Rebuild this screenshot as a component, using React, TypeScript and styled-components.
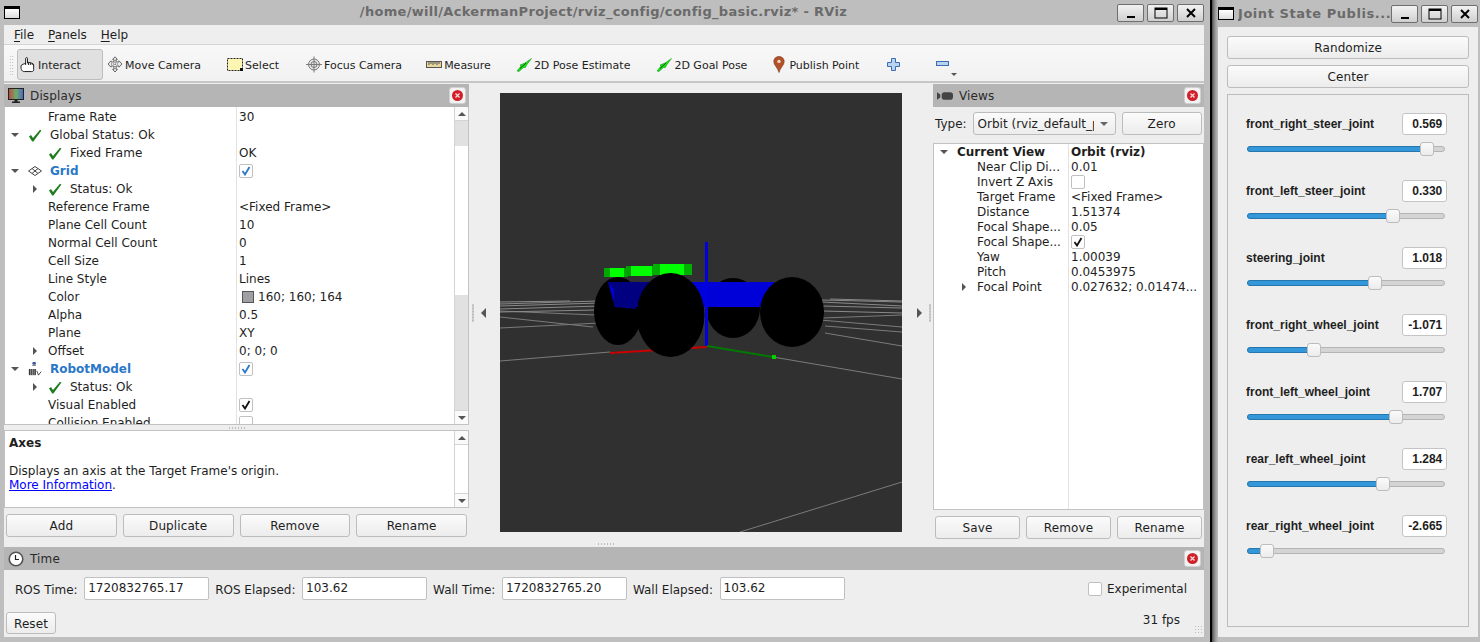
import React from "react";
import styled, { createGlobalStyle } from "styled-components";

const GlobalStyle = createGlobalStyle`
  html, body {
    margin: 0;
    padding: 0;
    height: 100%;
    overflow: hidden;
    background: #bebebe;
  }
  * { box-sizing: border-box; }
`;

const Desktop = styled.div`
  display: flex;
  width: 1480px;
  height: 642px;
  font-family: "DejaVu Sans", sans-serif;
  font-size: 12px;
  color: #1e1e1e;
  overflow: hidden;
`;

/* window frames */
const RvizWindow = styled.div`
  width: 1210px;
  height: 642px;
  flex: none;
  display: flex;
  flex-direction: column;
  background: #bebebe;
  padding: 0 6px 5px 4px;
`;

const WindowEdge = styled.div`
  width: 8px;
  flex: none;
  border-left: 2px solid #000;
  background: linear-gradient(90deg, #4a4a4a, #8f8f8f 45%, #bdbdbd);
`;

const JointWindow = styled.div`
  flex: 1;
  height: 642px;
  display: flex;
  flex-direction: column;
  background: #bebebe;
  padding: 0 4px 5px 0;
`;

const TitleBar = styled.div<{ $h: number }>`
  height: ${(p) => p.$h}px;
  flex: none;
  display: flex;
  align-items: center;
  font-weight: 700;
  font-size: 13px;
  color: #6a6a6a;
`;

const WindowGlyph = styled.div`
  width: 16px;
  height: 13px;
  flex: none;
  background: linear-gradient(#fff, #ddd);
  border: 1px solid #000;
  border-top-width: 3px;
`;

const TitleText = styled.div`
  flex: 1;
  text-align: center;
  white-space: nowrap;
  overflow: hidden;
  letter-spacing: 0.3px;
  padding: 0 0 2px 70px;
`;

const JointTitle = styled(TitleText)`
  text-align: left;
  padding: 0;
  margin-left: 4px;
  letter-spacing: 0.55px;
`;

const WinButtons = styled.div`
  display: flex;
  gap: 3px;
  flex: none;
`;

const WinButton = styled.div`
  width: 27px;
  height: 18px;
  background: linear-gradient(#f2f2f2, #cfcfcf);
  border: 1px solid #6e6e6e;
  border-radius: 2px;
  display: flex;
  align-items: center;
  justify-content: center;
`;

/* menu and toolbar */
const MenuBar = styled.div`
  height: 20px;
  flex: none;
  display: flex;
  align-items: center;
  gap: 14px;
  padding-left: 10px;
  background: #eeeeee;
  border-bottom: 1px solid #d4d4d4;
`;

const MenuItem = styled.span`
  u { text-decoration-thickness: 1px; text-underline-offset: 2px; }
`;

const Toolbar = styled.div`
  height: 38px;
  flex: none;
  display: flex;
  align-items: center;
  padding: 3px 0 0 5px;
  font-size: 11px;
  background: linear-gradient(#f8f8f8, #f1f1f1);
  border-bottom: 2px solid #c6c6c6;
`;

const GripDots = styled.div`
  width: 5px;
  height: 20px;
  margin-right: 3px;
  flex: none;
  background-image: radial-gradient(#b4b4b4 0.7px, transparent 0.8px);
  background-size: 2.5px 3px;
`;

const ToolButton = styled.div<{ $active?: boolean; $end: number }>`
  height: 31px;
  display: flex;
  align-items: center;
  gap: 2px;
  padding: 0 ${(p) => p.$end}px 0 ${(p) => (p.$active ? 2 : 4)}px;
  white-space: nowrap;
  border-radius: 3px;
  border: 1px solid ${(p) => (p.$active ? "#bcbcbc" : "transparent")};
  background: ${(p) => (p.$active ? "#e0e0e0" : "transparent")};
  margin-left: ${(p) => (p.$active ? 0 : -1)}px;
  position: relative;
`;

const ToolIcon = styled.div`
  width: 16px;
  flex: none;
  display: flex;
  align-items: center;
  justify-content: center;
`;

const ToolLabel = styled.span`
  padding-top: 2px;
`;

const ToolChevron = styled.div`
  position: absolute;
  right: -4px;
  bottom: 3px;
  width: 0;
  height: 0;
  border: 3px solid transparent;
  border-top: 3px solid #555;
  border-bottom: 0;
`;

/* main area */
const MainArea = styled.div`
  flex: 1;
  min-height: 0;
  display: flex;
  background: #eeeeee;
`;

const DisplaysColumn = styled.div`
  width: 465px;
  flex: none;
  display: flex;
  flex-direction: column;
  padding-top: 1px;
`;

const ViewsColumn = styled.div`
  width: 271px;
  flex: none;
  display: flex;
  flex-direction: column;
  padding-top: 1px;
`;

const CenterColumn = styled.div`
  flex: 1;
  display: flex;
  position: relative;
  padding: 10px 0 15px;
`;

const SideRail = styled.div<{ $inset: number }>`
  flex: 0 0 31px;
  display: flex;
  align-items: center;
  gap: 7px;
  padding-left: ${(p) => p.$inset}px;
`;

const DotsV = styled.div`
  width: 2px;
  height: 18px;
  flex: none;
  background-image: radial-gradient(#bdbdbd 0.8px, transparent 0.9px);
  background-size: 2px 3px;
`;

const DotsH = styled.div`
  position: absolute;
  bottom: 2px;
  left: 128px;
  width: 17px;
  height: 2px;
  background-image: radial-gradient(#bdbdbd 0.8px, transparent 0.9px);
  background-size: 3px 2px;
`;

const RailArrow = styled.div<{ $dir: "left" | "right" }>`
  width: 0;
  height: 0;
  flex: none;
  border-top: 5px solid transparent;
  border-bottom: 5px solid transparent;
  ${(p) => (p.$dir === "left" ? "border-right: 5px solid #555;" : "border-left: 5px solid #555;")}
`;

const Viewport = styled.div`
  width: 402px;
  height: 439px;
  flex: none;
  background: #303030;
  svg { display: block; }
`;

const DockTitle = styled.div`
  height: 23px;
  flex: none;
  display: flex;
  align-items: center;
  gap: 6px;
  padding: 0 3px 0 4px;
  background: #b5b5b5;
  color: #2a2a2a;
`;

const DockName = styled.div`
  flex: 1;
  letter-spacing: 0.15px;
`;

const DockClose = styled.div`
  width: 17px;
  height: 17px;
  background: #f3f3f3;
  border: 1px solid #d0d0d0;
  border-radius: 3px;
  display: flex;
  align-items: center;
  justify-content: center;
`;

/* property trees */
const TreeFrame = styled.div<{ $h: number; $top?: boolean }>`
  height: ${(p) => p.$h}px;
  flex: none;
  display: flex;
  background: #fff;
  border: 1px solid #c2c2c2;
  ${(p) => (p.$top ? "" : "border-top: 0;")}
  overflow: hidden;
`;

const TreeBody = styled.div<{ $split: number; $top: number }>`
  flex: 1;
  min-width: 0;
  overflow: hidden;
  padding-top: ${(p) => p.$top}px;
  background: linear-gradient(#e2e2e2, #e2e2e2) no-repeat ${(p) => p.$split}px 0 / 1px 100%;
`;

const TreeRow = styled.div<{ $h: number; $split: number }>`
  height: ${(p) => p.$h}px;
  display: grid;
  grid-template-columns: ${(p) => p.$split}px 1fr;
  align-items: center;
  white-space: nowrap;
`;

const NameCell = styled.div<{ $level: number }>`
  display: flex;
  align-items: center;
  padding-left: ${(p) => p.$level * 20}px;
  min-width: 0;
`;

const ArrowSlot = styled.div`
  width: 20px;
  flex: none;
  display: flex;
  justify-content: center;
`;

const RowArrow = styled.div<{ $open?: boolean }>`
  width: 0;
  height: 0;
  ${(p) =>
    p.$open
      ? "border-left: 4px solid transparent; border-right: 4px solid transparent; border-top: 4px solid #555;"
      : "border-top: 4px solid transparent; border-bottom: 4px solid transparent; border-left: 4px solid #555;"}
`;

const RowIcon = styled.div`
  width: 14px;
  height: 14px;
  flex: none;
  margin: 0 8px 0 3px;
  display: flex;
  align-items: center;
  justify-content: center;
`;

const RowName = styled.span<{ $kind?: "group" | "bold"; $afterIcon: boolean }>`
  margin-left: ${(p) => (p.$afterIcon ? 0 : 3)}px;
  font-weight: ${(p) => (p.$kind ? 700 : 400)};
  color: ${(p) => (p.$kind === "group" ? "#2b77c8" : "inherit")};
`;

const ValueCell = styled.div<{ $bold?: boolean }>`
  padding-left: 3px;
  display: flex;
  align-items: center;
  gap: 4px;
  font-weight: ${(p) => (p.$bold ? 700 : 400)};
  overflow: hidden;
  min-width: 0;
`;

const Swatch = styled.div`
  width: 12px;
  height: 12px;
  margin-left: 3px;
  background: #a0a0a4;
  border: 1px solid #555;
`;

const CheckBox = styled.div`
  width: 14px;
  height: 14px;
  flex: none;
  background: #fff;
  border: 1px solid #c0c0c0;
  border-radius: 2px;
  display: flex;
  align-items: center;
  justify-content: center;
`;

/* scrollbars */
const ScrollBar = styled.div`
  width: 14px;
  flex: none;
  display: flex;
  flex-direction: column;
  background: #fff;
  border-left: 1px solid #d4d4d4;
`;

const ScrollButton = styled.div<{ $dir: "up" | "down" }>`
  height: 14px;
  flex: none;
  display: flex;
  align-items: center;
  justify-content: center;
  background: #fafafa;
  border-${(p) => (p.$dir === "up" ? "bottom" : "top")}: 1px solid #d4d4d4;
  &::after {
    content: "";
    border-left: 4px solid transparent;
    border-right: 4px solid transparent;
    border-${(p) => (p.$dir === "up" ? "bottom" : "top")}: 4px solid #555;
  }
`;

const ScrollThumb = styled.div<{ $h: number }>`
  height: ${(p) => p.$h}px;
  flex: none;
  background: #e1e1e1;
`;

const ScrollGap = styled.div`
  flex: 1;
`;

const SplitDots = styled.div`
  height: 5px;
  flex: none;
  display: flex;
  justify-content: center;
  align-items: center;
  &::after {
    content: "";
    width: 17px;
    height: 2px;
    background-image: radial-gradient(#bdbdbd 0.8px, transparent 0.9px);
    background-size: 3px 2px;
  }
`;

const DescriptionFrame = styled.div`
  height: 78px;
  flex: none;
  display: flex;
  background: #fff;
  border: 1px solid #c2c2c2;
`;

const DescriptionText = styled.div`
  flex: 1;
  padding: 5px 4px;
  line-height: 14px;
`;

const DescTitle = styled.div`
  font-weight: 700;
  margin-bottom: 14px;
`;

const MoreLink = styled.a`
  color: #0000ff;
  text-decoration: underline;
`;

/* buttons and fields */
const ButtonRow = styled.div<{ $pad: string; $gap: number }>`
  display: flex;
  gap: ${(p) => p.$gap}px;
  padding: ${(p) => p.$pad};
`;

const PushButton = styled.div<{ $w?: number }>`
  height: 23px;
  flex: ${(p) => (p.$w ? `0 0 ${p.$w}px` : "1 1 0")};
  display: flex;
  align-items: center;
  justify-content: center;
  background: linear-gradient(#fbfbfb, #ececec);
  border: 1px solid #bcbcbc;
  border-radius: 3px;
  letter-spacing: 0.1px;
`;

const TypeRow = styled.div`
  display: flex;
  align-items: center;
  height: 23px;
  margin: 5px 2px 8px;
  gap: 6px;
`;

const Combo = styled.div`
  width: 143px;
  height: 23px;
  flex: none;
  display: flex;
  align-items: center;
  padding-left: 4px;
  background: linear-gradient(#fbfbfb, #ececec);
  border: 1px solid #bcbcbc;
  border-radius: 3px;
`;

const ComboText = styled.div`
  width: 116px;
  overflow: hidden;
  white-space: nowrap;
`;

const ComboArrow = styled.div`
  margin-left: 6px;
  border-left: 4px solid transparent;
  border-right: 4px solid transparent;
  border-top: 4px solid #666;
`;

const TimePanel = styled.div`
  height: 90px;
  flex: none;
  display: flex;
  flex-direction: column;
  background: #eeeeee;
  position: relative;
`;

const TimeRow = styled.div`
  display: flex;
  align-items: center;
  height: 23px;
  margin-top: 7px;
  padding-left: 11px;
`;

const TimeLabel = styled.span`
  margin-right: 6.5px;
  padding-top: 2px;
  white-space: nowrap;
`;

const TimeField = styled.div`
  width: 125px;
  height: 23px;
  flex: none;
  margin-right: 6px;
  padding: 0 3px 1px;
  display: flex;
  align-items: center;
  background: #fff;
  border: 1px solid #c0c0c0;
  border-radius: 2px;
`;

const Experimental = styled.div`
  margin-left: auto;
  margin-right: 17px;
  display: flex;
  align-items: center;
  gap: 5px;
`;

const TimeFooter = styled.div`
  display: flex;
  align-items: center;
  justify-content: space-between;
  margin-top: 12px;
  padding: 0 24px 0 2px;
`;

const FpsText = styled.span`
  margin-bottom: 6px;
`;

const ResetButton = styled(PushButton)`
  height: 22px;
  padding-top: 1px;
`;

const ResizeGrip = styled.div`
  position: absolute;
  right: 0;
  bottom: 2px;
  width: 10px;
  height: 10px;
  background-image: radial-gradient(#bdbdbd 0.7px, transparent 0.8px);
  background-size: 3px 3px;
`;

/* joint state publisher */
const JointBody = styled.div`
  flex: 1;
  display: flex;
  flex-direction: column;
  background: #eeeeee;
  padding: 9px 9px 10px;
`;

const JointButton = styled(PushButton)`
  flex: none;
  margin-bottom: 6px;
`;

const JointBox = styled.div`
  flex: 1;
  border: 1px solid #bcbcbc;
  padding: 18px 21px 0 18px;
`;

const JointItem = styled.div`
  height: 67px;
`;

const JointHead = styled.div`
  height: 22px;
  display: flex;
  align-items: center;
  justify-content: space-between;
  font-family: "Liberation Sans", Arial, sans-serif;
  font-weight: 700;
  font-size: 12px;
`;

const JointValue = styled.div`
  width: 45px;
  height: 22px;
  display: flex;
  align-items: center;
  justify-content: flex-end;
  padding-right: 4px;
  background: #fff;
  border: 1px solid #c4c4c4;
  border-radius: 3px;
`;

const SliderGroove = styled.div`
  position: relative;
  height: 6px;
  margin: 11px 0 0 1px;
  width: 198px;
  background: #d4d4d4;
  border: 1px solid #b4b4b4;
  border-radius: 3px;
`;

const SliderFill = styled.div<{ $pos: number }>`
  width: ${(p) => p.$pos + 4}px;
  height: 6px;
  margin: -1px 0 0 -1px;
  background: #3497da;
  border: 1px solid #2677ad;
  border-radius: 3px;
`;

const SliderHandle = styled.div<{ $pos: number }>`
  position: absolute;
  top: -5px;
  left: ${(p) => p.$pos - 1}px;
  width: 14px;
  height: 14px;
  background: linear-gradient(#fafafa, #ececec);
  border: 1px solid #bcbcbc;
  border-radius: 3px;
`;

/* icons */
const Minimize = () => (
  <svg width="14" height="12" viewBox="0 0 14 12"><rect x="3" y="9" width="8" height="2" fill="#000" /></svg>
);
const Maximize = () => (
  <svg width="14" height="12" viewBox="0 0 14 12"><rect x="1" y="1" width="12" height="10" fill="none" stroke="#000" /><rect x="1" y="1" width="12" height="2" fill="#000" /></svg>
);
const CloseX = () => (
  <svg width="12" height="12" viewBox="0 0 12 12"><path d="M2 2 10 10M10 2 2 10" stroke="#000" strokeWidth="2" /></svg>
);
const CloseDot = () => (
  <svg width="13" height="13" viewBox="0 0 13 13">
    <circle cx="6.5" cy="6.5" r="5.5" fill="#d0202a" />
    <path d="M4.5 4.5 8.5 8.5M8.5 4.5 4.5 8.5" stroke="#f6d5d5" strokeWidth="1.4" />
  </svg>
);
const HandIcon = () => (
  <svg width="16" height="17" viewBox="0 0 17 17" fill="#fff" stroke="#111" strokeWidth="1" strokeLinejoin="round">
    <path d="M6 9V2.2c0-1.4 2-1.4 2 0V7l1 -.7 1.6.2 1.2.4 1.7.6c.7.2 1 .7 1 1.4V14c0 1.3-.8 2-2 2H4.5C3 16 2 15 1.5 13.8.8 12.2 1 10.4 1.5 9.2 2.4 8.7 4 7.6 6 7.4" />
    <path d="M9 6.5V9M11 6.8V9M13 7.2V9" fill="none" />
  </svg>
);
const MoveIcon = () => (
  <svg width="16" height="17" viewBox="0 0 16 17" fill="#e8e8e8" stroke="#6a6a6a" strokeWidth="1">
    <path d="M8 .8 10.4 3.4H9.2V6H12V4.8L15 8 12 11.2V10H9.2V13.4H10.4L8 16 5.6 13.4H6.8V10H4V11.2L1 8 4 4.8V6H6.8V3.4H5.6Z" />
    <path d="M4 8H12M8 4V13" strokeDasharray="1 1" />
  </svg>
);
const SelectIcon = () => (
  <svg width="16" height="14" viewBox="0 0 16 14">
    <rect x=".5" y=".5" width="15" height="12" fill="#fdf6b2" stroke="#222" strokeDasharray="2 1" />
    <rect x="13" y="10" width="3" height="3" fill="#111" />
  </svg>
);
const FocusIcon = () => (
  <svg width="16" height="17" viewBox="0 0 16 17" fill="none" stroke="#7a7a7a">
    <path d="M8 .5V16.5M0 8.5H16" />
    <circle cx="8" cy="8.5" r="5.5" fill="#e6e6e6" />
    <circle cx="8" cy="8.5" r="3" />
    <path d="M8 3V14M2.5 8.5H13.5" />
  </svg>
);
const RulerIcon = () => (
  <svg width="16" height="8" viewBox="0 0 16 8">
    <rect x=".5" y=".5" width="15" height="6" fill="#e6d89a" stroke="#555" />
    <path d="M3 1V4M5 1V3M7 1V4M9 1V3M11 1V4M13 1V3" stroke="#555" />
  </svg>
);
const PoseIcon = () => (
  <svg width="16" height="14" viewBox="0 0 16 14">
    <path d="M1 13 5 8 4 7 9 5 15.5 .5 11 6.5 9 10 8 9 3 13.5Z" fill="#14e614" stroke="#0b8a0b" strokeWidth=".5" />
    <path d="M4 10.5 10 5" stroke="#055a05" strokeWidth="1" />
  </svg>
);
const PinIcon = () => (
  <svg width="12" height="17" viewBox="0 0 12 17">
    <path d="M6 .5C2.8.5.8 2.8.8 5.6.8 9 4.6 11.6 6 16.5 7.4 11.6 11.2 9 11.2 5.6 11.2 2.8 9.2.5 6 .5Z" fill="#b3522a" stroke="#7a3518" strokeWidth=".6" />
    <circle cx="6" cy="5.4" r="1.7" fill="#f4d8c4" />
  </svg>
);
const PlusIcon = () => (
  <svg width="13" height="13" viewBox="0 0 13 13">
    <path d="M4.5.5H8.5V4.5H12.5V8.5H8.5V12.5H4.5V8.5H.5V4.5H4.5Z" fill="#b9d2ee" stroke="#3a6fb5" />
  </svg>
);
const MinusIcon = () => (
  <svg width="13" height="13" viewBox="0 0 13 13">
    <rect x=".5" y="3.5" width="12" height="4" fill="#b9d2ee" stroke="#3a6fb5" />
  </svg>
);
const MonitorIcon = () => (
  <svg width="16" height="16" viewBox="0 0 16 16">
    <defs>
      <linearGradient id="screenGrad" x1="0" x2="1" y1="0" y2="0">
        <stop offset="0" stopColor="#c2433f" />
        <stop offset=".5" stopColor="#6fae6a" />
        <stop offset="1" stopColor="#4f63c4" />
      </linearGradient>
    </defs>
    <rect x=".5" y=".5" width="15" height="11" fill="url(#screenGrad)" stroke="#222" />
    <path d="M6.5 12H9.5V13.5H12V15H4V13.5H6.5Z" fill="#222" />
  </svg>
);
const CameraIcon = () => (
  <svg width="16" height="12" viewBox="0 0 17 12">
    <path d="M0 2 3.5 4.5V7.5L0 10Z" fill="#444" />
    <rect x="5" y="2" width="12" height="8" rx="3" fill="#444" />
  </svg>
);
const ClockIcon = () => (
  <svg width="16" height="16" viewBox="0 0 16 16">
    <circle cx="8" cy="8" r="6.8" fill="#fff" stroke="#555" strokeWidth="1.6" />
    <path d="M7.5 4V8.5H11" fill="none" stroke="#222" strokeWidth="1.2" />
  </svg>
);
const GreenCheck = () => (
  <svg width="14" height="13" viewBox="0 0 14 13">
    <path d="M1 7.5 3 6 5 9 12 .8 13.4 1.6 5.4 12.6H4.2Z" fill="#1d7d1d" />
  </svg>
);
const TickMark = ({ color }: { color: string }) => (
  <svg width="10" height="10" viewBox="0 0 10 10">
    <path d="M1.5 5 4 8.5 8.5 1" fill="none" stroke={color} strokeWidth="1.8" />
  </svg>
);
const GridIcon = () => (
  <svg width="14" height="10" viewBox="0 0 14 10" fill="none" stroke="#444">
    <path d="M7 .5 13.5 5 7 9.5 .5 5Z" />
    <path d="M4 2.5 10 7.5M10 2.5 4 7.5" />
  </svg>
);
const RobotIcon = () => (
  <svg width="16" height="16" viewBox="0 0 16 16">
    <rect x="5" y="0" width="4" height="3" rx="1" fill="#3a5a9a" />
    <rect x="5" y="3.5" width="4" height="1" fill="#777" />
    <path d="M1 8H9V15H1Z" fill="#333" />
    <path d="M3 8V15M5 8V15M7 8V15" stroke="#ddd" strokeWidth=".7" />
    <path d="M10 10 12 15 15 11" fill="none" stroke="#333" strokeWidth="1" />
  </svg>
);

const Scene = () => (
  <svg width="402" height="439" viewBox="500 93 402 439">
    <g stroke="#7b7b7b" strokeWidth="1" fill="none">
      <path d="M500 361 610 352M773 357 902 379M902 482 740 532" />
      <path d="M500 317 593 327M500 328 600 323M825 326 902 332M825 333 902 346" />
      <path d="M820 320 902 327M500 311 596 315M823 318 902 315" />
    </g>
    <g stroke="#8a8a8a" strokeWidth="1" fill="none">
      <path d="M500 304 598 301M500 306 600 303M500 309 600 306M500 312 596 310" />
      <path d="M822 300 902 302M822 302 902 306M822 306 902 308M822 311 902 313" />
      <path d="M500 302 570 301M830 299 902 301" />
    </g>
    <g shapeRendering="crispEdges">
      <rect x="604" y="268" width="24" height="9" fill="#00a800" />
      <rect x="610" y="268" width="14" height="9" fill="#00ff00" />
      <rect x="626" y="266" width="27" height="10" fill="#00a000" />
      <rect x="631" y="266" width="21" height="10" fill="#00ff00" />
      <rect x="653" y="264" width="39" height="11" fill="#00b000" />
      <rect x="660" y="264" width="24" height="11" fill="#00ff00" />
    </g>
    <ellipse cx="618" cy="311" rx="24" ry="34" fill="#000" />
    <ellipse cx="733" cy="308" rx="27" ry="30" fill="#000" />
    <path d="M608 282 775 282 760 307 615 307Z" fill="#0000d8" />
    <path d="M608 282 650 282 635 309 614 307 614 290Z" fill="#000080" />
    <rect x="705" y="242" width="3" height="104" fill="#0000e0" />
    <path d="M610 352 707 346 707 348 610 354Z" fill="#c80000" />
    <path d="M707 345 773 356 773 358 707 347Z" fill="#007a00" />
    <rect x="772" y="355" width="4" height="4" fill="#00d000" />
    <ellipse cx="670.5" cy="315" rx="34" ry="42" fill="#000" />
    <ellipse cx="792" cy="312" rx="32" ry="35" fill="#000" />
  </svg>
);

type DisplayRow = {
  name: string;
  level?: number;
  arrow?: "open" | "closed";
  icon?: React.ReactNode;
  kind?: "group" | "bold";
  value?: React.ReactNode;
  bold?: boolean;
};

const tick = (c: string) => (
  <CheckBox>
    <TickMark color={c} />
  </CheckBox>
);

const DISPLAY_ROWS: DisplayRow[] = [
  { name: "Frame Rate", level: 1, value: "30" },
  { name: "Global Status: Ok", arrow: "open", icon: <GreenCheck /> },
  { name: "Fixed Frame", level: 1, icon: <GreenCheck />, value: "OK" },
  { name: "Grid", arrow: "open", icon: <GridIcon />, kind: "group", value: tick("#2b77c8") },
  { name: "Status: Ok", level: 1, arrow: "closed", icon: <GreenCheck /> },
  { name: "Reference Frame", level: 1, value: "<Fixed Frame>" },
  { name: "Plane Cell Count", level: 1, value: "10" },
  { name: "Normal Cell Count", level: 1, value: "0" },
  { name: "Cell Size", level: 1, value: "1" },
  { name: "Line Style", level: 1, value: "Lines" },
  { name: "Color", level: 1, value: <><Swatch />160; 160; 164</> },
  { name: "Alpha", level: 1, value: "0.5" },
  { name: "Plane", level: 1, value: "XY" },
  { name: "Offset", level: 1, arrow: "closed", value: "0; 0; 0" },
  { name: "RobotModel", arrow: "open", icon: <RobotIcon />, kind: "group", value: tick("#2b77c8") },
  { name: "Status: Ok", level: 1, arrow: "closed", icon: <GreenCheck /> },
  { name: "Visual Enabled", level: 1, value: tick("#111") },
  { name: "Collision Enabled", level: 1, value: <CheckBox /> },
];

const VIEW_ROWS: DisplayRow[] = [
  { name: "Current View", arrow: "open", kind: "bold", value: "Orbit (rviz)", bold: true },
  { name: "Near Clip Di...", level: 1, value: "0.01" },
  { name: "Invert Z Axis", level: 1, value: <CheckBox /> },
  { name: "Target Frame", level: 1, value: "<Fixed Frame>" },
  { name: "Distance", level: 1, value: "1.51374" },
  { name: "Focal Shape...", level: 1, value: "0.05" },
  { name: "Focal Shape...", level: 1, value: tick("#111") },
  { name: "Yaw", level: 1, value: "1.00039" },
  { name: "Pitch", level: 1, value: "0.0453975" },
  { name: "Focal Point", level: 1, arrow: "closed", value: "0.027632; 0.01474..." },
];

const TOOLS: { label: string; icon: React.ReactNode; active?: boolean; end: number }[] = [
  { label: "Interact", icon: <HandIcon />, active: true, end: 21 },
  { label: "Move Camera", icon: <MoveIcon />, end: 21 },
  { label: "Select", icon: <SelectIcon />, end: 22 },
  { label: "Focus Camera", icon: <FocusIcon />, end: 19 },
  { label: "Measure", icon: <RulerIcon />, end: 20 },
  { label: "2D Pose Estimate", icon: <PoseIcon />, end: 21 },
  { label: "2D Goal Pose", icon: <PoseIcon />, end: 19 },
  { label: "Publish Point", icon: <PinIcon />, end: 23 },
];

const JOINTS = [
  { name: "front_right_steer_joint", value: "0.569", pos: 173 },
  { name: "front_left_steer_joint", value: "0.330", pos: 139 },
  { name: "steering_joint", value: "1.018", pos: 121 },
  { name: "front_right_wheel_joint", value: "-1.071", pos: 60 },
  { name: "front_left_wheel_joint", value: "1.707", pos: 142 },
  { name: "rear_left_wheel_joint", value: "1.284", pos: 129 },
  { name: "rear_right_wheel_joint", value: "-2.665", pos: 13 },
];

const Tree = ({ rows, rowH, split, top }: { rows: DisplayRow[]; rowH: number; split: number; top: number }) => (
  <TreeBody $split={split} $top={top}>
    {rows.map((r, i) => (
      <TreeRow key={i} $h={rowH} $split={split}>
        <NameCell $level={r.level ?? 0}>
          <ArrowSlot>{r.arrow && <RowArrow $open={r.arrow === "open"} />}</ArrowSlot>
          {r.icon && <RowIcon>{r.icon}</RowIcon>}
          <RowName $kind={r.kind} $afterIcon={!!r.icon}>{r.name}</RowName>
        </NameCell>
        <ValueCell $bold={r.bold}>{r.value}</ValueCell>
      </TreeRow>
    ))}
  </TreeBody>
);

export default function App() {
  return (
    <>
      <GlobalStyle />
      <Desktop>
        <RvizWindow>
          <TitleBar $h={25}>
            <WindowGlyph />
            <TitleText>/home/will/AckermanProject/rviz_config/config_basic.rviz* - RViz</TitleText>
            <WinButtons>
              <WinButton><Minimize /></WinButton>
              <WinButton><Maximize /></WinButton>
              <WinButton><CloseX /></WinButton>
            </WinButtons>
          </TitleBar>
          <MenuBar>
            <MenuItem><u>F</u>ile</MenuItem>
            <MenuItem><u>P</u>anels</MenuItem>
            <MenuItem><u>H</u>elp</MenuItem>
          </MenuBar>
          <Toolbar>
            <GripDots />
            {TOOLS.map((t) => (
              <ToolButton key={t.label} $active={t.active} $end={t.end}>
                <ToolIcon>{t.icon}</ToolIcon>
                <ToolLabel>{t.label}</ToolLabel>
              </ToolButton>
            ))}
            <ToolButton $end={31}><PlusIcon /></ToolButton>
            <ToolButton $end={4}>
              <MinusIcon />
              <ToolChevron />
            </ToolButton>
          </Toolbar>
          <MainArea>
            <DisplaysColumn>
              <DockTitle>
                <MonitorIcon />
                <DockName>Displays</DockName>
                <DockClose><CloseDot /></DockClose>
              </DockTitle>
              <TreeFrame $h={318}>
                <Tree rows={DISPLAY_ROWS} rowH={18} split={231} top={1} />
                <ScrollBar>
                  <ScrollButton $dir="up" />
                  <ScrollThumb $h={25} />
                  <ScrollGap />
                  <ScrollThumb $h={115} />
                  <ScrollButton $dir="down" />
                </ScrollBar>
              </TreeFrame>
              <SplitDots />
              <DescriptionFrame>
                <DescriptionText>
                  <DescTitle>Axes</DescTitle>
                  Displays an axis at the Target Frame's origin.
                  <br />
                  <MoreLink>More Information</MoreLink>.
                </DescriptionText>
                <ScrollBar>
                  <ScrollButton $dir="up" />
                  <ScrollGap />
                  <ScrollButton $dir="down" />
                </ScrollBar>
              </DescriptionFrame>
              <ButtonRow $pad="6px 2px 0" $gap={6}>
                <PushButton>Add</PushButton>
                <PushButton>Duplicate</PushButton>
                <PushButton>Remove</PushButton>
                <PushButton>Rename</PushButton>
              </ButtonRow>
            </DisplaysColumn>
            <CenterColumn>
              <SideRail $inset={3}>
                <DotsV />
                <RailArrow $dir="left" />
              </SideRail>
              <Viewport><Scene /></Viewport>
              <SideRail $inset={15}>
                <RailArrow $dir="right" />
                <DotsV />
              </SideRail>
              <DotsH />
            </CenterColumn>
            <ViewsColumn>
              <DockTitle>
                <CameraIcon />
                <DockName>Views</DockName>
                <DockClose><CloseDot /></DockClose>
              </DockTitle>
              <TypeRow>
                Type:
                <Combo>
                  <ComboText>Orbit (rviz_default_plugins)</ComboText>
                  <ComboArrow />
                </Combo>
                <PushButton $w={80}>Zero</PushButton>
              </TypeRow>
              <TreeFrame $h={367} $top>
                <Tree rows={VIEW_ROWS} rowH={15} split={134} top={0} />
              </TreeFrame>
              <ButtonRow $pad="6px 2px 0" $gap={6}>
                <PushButton>Save</PushButton>
                <PushButton>Remove</PushButton>
                <PushButton>Rename</PushButton>
              </ButtonRow>
            </ViewsColumn>
          </MainArea>
          <TimePanel>
            <DockTitle>
              <ClockIcon />
              <DockName>Time</DockName>
              <DockClose><CloseDot /></DockClose>
            </DockTitle>
            <TimeRow>
              <TimeLabel>ROS Time:</TimeLabel>
              <TimeField>1720832765.17</TimeField>
              <TimeLabel>ROS Elapsed:</TimeLabel>
              <TimeField>103.62</TimeField>
              <TimeLabel>Wall Time:</TimeLabel>
              <TimeField>1720832765.20</TimeField>
              <TimeLabel>Wall Elapsed:</TimeLabel>
              <TimeField>103.62</TimeField>
              <Experimental>
                <CheckBox />
                Experimental
              </Experimental>
            </TimeRow>
            <TimeFooter>
              <ResetButton $w={50}>Reset</ResetButton>
              <FpsText>31 fps</FpsText>
            </TimeFooter>
            <ResizeGrip />
          </TimePanel>
        </RvizWindow>
        <WindowEdge />
        <JointWindow>
          <TitleBar $h={27}>
            <WindowGlyph />
            <JointTitle>Joint State Publis...</JointTitle>
            <WinButtons>
              <WinButton><Minimize /></WinButton>
              <WinButton><Maximize /></WinButton>
              <WinButton><CloseX /></WinButton>
            </WinButtons>
          </TitleBar>
          <JointBody>
            <JointButton>Randomize</JointButton>
            <JointButton>Center</JointButton>
            <JointBox>
              {JOINTS.map((j) => (
                <JointItem key={j.name}>
                  <JointHead>
                    {j.name}
                    <JointValue>{j.value}</JointValue>
                  </JointHead>
                  <SliderGroove>
                    <SliderFill $pos={j.pos} />
                    <SliderHandle $pos={j.pos} />
                  </SliderGroove>
                </JointItem>
              ))}
            </JointBox>
          </JointBody>
        </JointWindow>
      </Desktop>
    </>
  );
}
